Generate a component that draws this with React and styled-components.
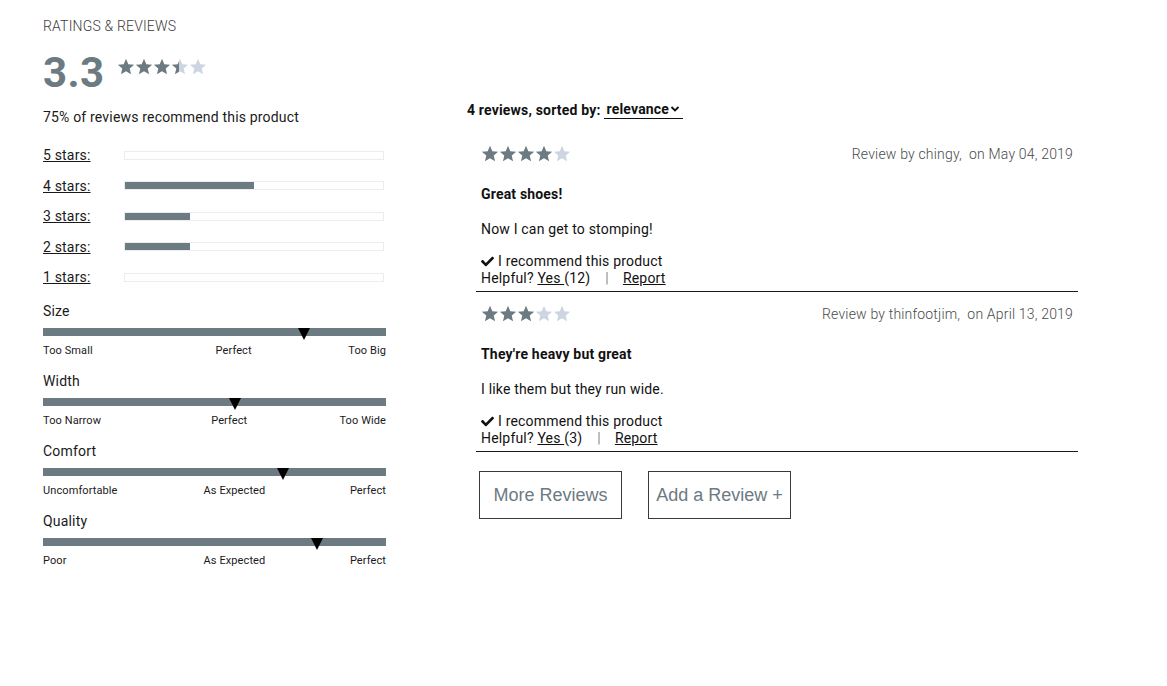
import React, { useId } from 'react';
import styled, { createGlobalStyle } from 'styled-components';
import { FaCheck } from 'react-icons/fa';

const SLATE = '#6c7a82';
const LIGHT = '#cdd5e2';

const Global = createGlobalStyle`
  html, body { margin: 0; padding: 0; background: #fff; }
  body { font-family: Roboto, "Liberation Sans", Arial, sans-serif; color: #1a1a1a; font-size: 14px; letter-spacing: 0.18px; }
  * { box-sizing: border-box; }
`;

const Page = styled.div`
  display: flex;
  align-items: flex-start;
  padding: 18px 0 0 43px;
`;

const LeftCol = styled.section`
  width: 343px;
  display: flex;
  flex-direction: column;
`;

const Heading = styled.h2`
  margin: 0;
  font-size: 14px;
  line-height: 16px;
  font-weight: 300;
  color: #3c3c3c;
`;

const Summary = styled.div`
  display: flex;
  align-items: flex-start;
  gap: 13px;
  margin-top: 18px;
`;

const BigScore = styled.div`
  font-size: 42px;
  line-height: 42px;
  font-weight: 700;
  letter-spacing: 0.3px;
  color: ${SLATE};
`;

const StarRow = styled.div`
  display: flex;
  margin-top: ${(p) => p.$offset || 0}px;
`;

const Recommend = styled.p`
  margin: 15px 0 0;
  font-size: 14px;
  line-height: 16px;
  color: #1a1a1a;
`;

const Breakdown = styled.div`
  margin-top: 15px;
  display: flex;
  flex-direction: column;
`;

const BreakRow = styled.div`
  display: grid;
  grid-template-columns: 81px 260px;
  align-items: center;
  height: 30.5px;
`;

const StarLink = styled.a`
  color: #1a1a1a;
  text-decoration: underline;
  font-size: 14px;
  line-height: 16px;
  cursor: pointer;
`;

const BarTrack = styled.div`
  height: 9px;
  border: 1px solid #ececec;
  background: #fff;
  display: flex;
`;

const BarFill = styled.div`
  height: 100%;
  background: ${SLATE};
`;

const Characteristics = styled.div`
  margin-top: 10px;
  display: flex;
  flex-direction: column;
  gap: 15.5px;
`;

const CharBlock = styled.div`
  display: flex;
  flex-direction: column;
`;

const CharTitle = styled.div`
  font-size: 14px;
  line-height: 16px;
  color: #1a1a1a;
`;

const CharTrack = styled.div`
  position: relative;
  margin-top: 9px;
  height: 8px;
  background: ${SLATE};
`;

const Marker = styled.div`
  position: absolute;
  top: 0;
  width: 0;
  height: 0;
  margin-left: -6px;
  border-left: 6px solid transparent;
  border-right: 6px solid transparent;
  border-top: 12px solid #000;
`;

const CharLabels = styled.div`
  display: grid;
  grid-template-columns: 76px 1fr auto;
  margin-top: 8.5px;
  font-size: 11px;
  line-height: 13px;
  letter-spacing: 0.1px;
  color: #1a1a1a;
`;

const CharLabel = styled.span`
  text-align: ${(p) => p.$align || 'left'};
  white-space: nowrap;
`;

const RightCol = styled.section`
  margin-left: 81px;
  margin-top: 83px;
  display: flex;
  flex-direction: column;
`;

const SortBar = styled.div`
  display: flex;
  align-items: center;
  font-weight: 700;
  font-size: 14px;
  line-height: 16px;
  color: #111;
`;

const SortSelect = styled.span`
  display: inline-flex;
  align-items: center;
  margin-left: 3px;
  padding: 0 3px 1px 3px;
  border-bottom: 1px solid #111;
  gap: 1px;
`;

const ReviewList = styled.div`
  margin-left: 9px;
  margin-top: 13px;
  width: 602px;
  display: flex;
  flex-direction: column;
`;

const Tile = styled.article`
  padding: 13px 5px 4.5px;
  border-bottom: 1px solid #1a1a1a;
`;

const TileHead = styled.div`
  display: flex;
  justify-content: space-between;
  align-items: center;
  height: 17px;
`;

const Byline = styled.span`
  font-size: 14px;
  line-height: 16px;
  color: #4a4a4a;
  font-weight: 300;
  white-space: pre;
`;

const Title = styled.h3`
  margin: 24px 0 0;
  font-size: 14px;
  line-height: 17px;
  font-weight: 700;
  color: #111;
`;

const Body = styled.p`
  margin: 18px 0 0;
  font-size: 14px;
  line-height: 17px;
  color: #111;
`;

const RecLine = styled.div`
  margin-top: 14.5px;
  display: flex;
  align-items: center;
  gap: 4px;
  font-size: 14px;
  line-height: 17px;
  color: #111;
`;

const HelpLine = styled.div`
  display: flex;
  align-items: center;
  font-size: 14px;
  line-height: 17px;
  color: #111;
  white-space: pre;
`;

const ULink = styled.a`
  color: #111;
  text-decoration: underline;
  cursor: pointer;
`;

const Sep = styled.span`
  color: #8a8a8a;
  margin: 0 14px 0 15px;
`;

const ButtonRow = styled.div`
  display: flex;
  gap: 26px;
  margin: 19px 0 0 3px;
`;

const OutlineButton = styled.button`
  width: 143px;
  height: 48px;
  background: #fff;
  border: 1px solid #3a3a3a;
  border-radius: 0;
  font-family: "Liberation Sans", Arial, sans-serif;
  font-size: 18px;
  letter-spacing: 0;
  color: ${SLATE};
  padding: 0;
  cursor: pointer;
`;

const STAR_D =
  'M12 17.27L18.18 21l-1.64-7.03L22 9.24l-7.19-.61L12 2 9.19 8.63 2 9.24l5.46 4.73L5.82 21z';

function Star({ fill, size }) {
  const id = useId().replace(/:/g, '');
  return (
    <svg width={size} height={size} viewBox="1 1 22 22">
      <defs>
        <linearGradient id={id} x1="0" x2="1" y1="0" y2="0">
          <stop offset={fill} stopColor={SLATE} />
          <stop offset={fill} stopColor={LIGHT} />
        </linearGradient>
      </defs>
      <path d={STAR_D} fill={`url(#${id})`} />
    </svg>
  );
}

function Stars({ value, size, offset }) {
  return (
    <StarRow $offset={offset}>
      {[0, 1, 2, 3, 4].map((i) => {
        const f = Math.max(0, Math.min(1, value - i));
        return <Star key={i} fill={f} size={size} />;
      })}
    </StarRow>
  );
}

const breakdown = [
  { label: '5 stars:', pct: 0 },
  { label: '4 stars:', pct: 50 },
  { label: '3 stars:', pct: 25 },
  { label: '2 stars:', pct: 25 },
  { label: '1 stars:', pct: 0 },
];

const chars = [
  { name: 'Size', pos: 76, labels: ['Too Small', 'Perfect', 'Too Big'] },
  { name: 'Width', pos: 56, labels: ['Too Narrow', 'Perfect', 'Too Wide'] },
  { name: 'Comfort', pos: 70, labels: ['Uncomfortable', 'As Expected', 'Perfect'] },
  { name: 'Quality', pos: 80, labels: ['Poor', 'As Expected', 'Perfect'] },
];

const reviews = [
  {
    rating: 4,
    by: 'Review by chingy,  on May 04, 2019',
    title: 'Great shoes!',
    body: 'Now I can get to stomping!',
    helpful: 12,
  },
  {
    rating: 3,
    by: 'Review by thinfootjim,  on April 13, 2019',
    title: "They're heavy but great",
    body: 'I like them but they run wide.',
    helpful: 3,
  },
];

export default function App() {
  return (
    <>
      <Global />
      <Page>
        <LeftCol>
          <Heading>RATINGS &amp; REVIEWS</Heading>
          <Summary>
            <BigScore>3.3</BigScore>
            <Stars value={3.45} size={18} offset={6} />
          </Summary>
          <Recommend>75% of reviews recommend this product</Recommend>
          <Breakdown>
            {breakdown.map((b) => (
              <BreakRow key={b.label}>
                <StarLink>{b.label}</StarLink>
                <BarTrack>
                  <BarFill style={{ width: `${b.pct}%` }} />
                </BarTrack>
              </BreakRow>
            ))}
          </Breakdown>
          <Characteristics>
            {chars.map((c) => (
              <CharBlock key={c.name}>
                <CharTitle>{c.name}</CharTitle>
                <CharTrack>
                  <Marker style={{ left: `${c.pos}%` }} />
                </CharTrack>
                <CharLabels>
                  <CharLabel>{c.labels[0]}</CharLabel>
                  <CharLabel $align="center">{c.labels[1]}</CharLabel>
                  <CharLabel $align="right">{c.labels[2]}</CharLabel>
                </CharLabels>
              </CharBlock>
            ))}
          </Characteristics>
        </LeftCol>
        <RightCol>
          <SortBar>
            4 reviews, sorted by:
            <SortSelect>
              relevance
              <svg width="10" height="8" viewBox="0 0 10 8">
                <path d="M1.5 2l3.5 3.5L8.5 2" stroke="#111" strokeWidth="1.8" fill="none" />
              </svg>
            </SortSelect>
          </SortBar>
          <ReviewList>
            {reviews.map((r) => (
              <Tile key={r.title}>
                <TileHead>
                  <Stars value={r.rating} size={18} />
                  <Byline>{r.by}</Byline>
                </TileHead>
                <Title>{r.title}</Title>
                <Body>{r.body}</Body>
                <RecLine>
                  <FaCheck size={13} color="#111" />
                  I recommend this product
                </RecLine>
                <HelpLine>
                  {'Helpful? '}
                  <ULink>{'Yes '}</ULink>
                  {`(${r.helpful})`}
                  <Sep>|</Sep>
                  <ULink>Report</ULink>
                </HelpLine>
              </Tile>
            ))}
            <ButtonRow>
              <OutlineButton>More Reviews</OutlineButton>
              <OutlineButton>Add a Review +</OutlineButton>
            </ButtonRow>
          </ReviewList>
        </RightCol>
      </Page>
    </>
  );
}
